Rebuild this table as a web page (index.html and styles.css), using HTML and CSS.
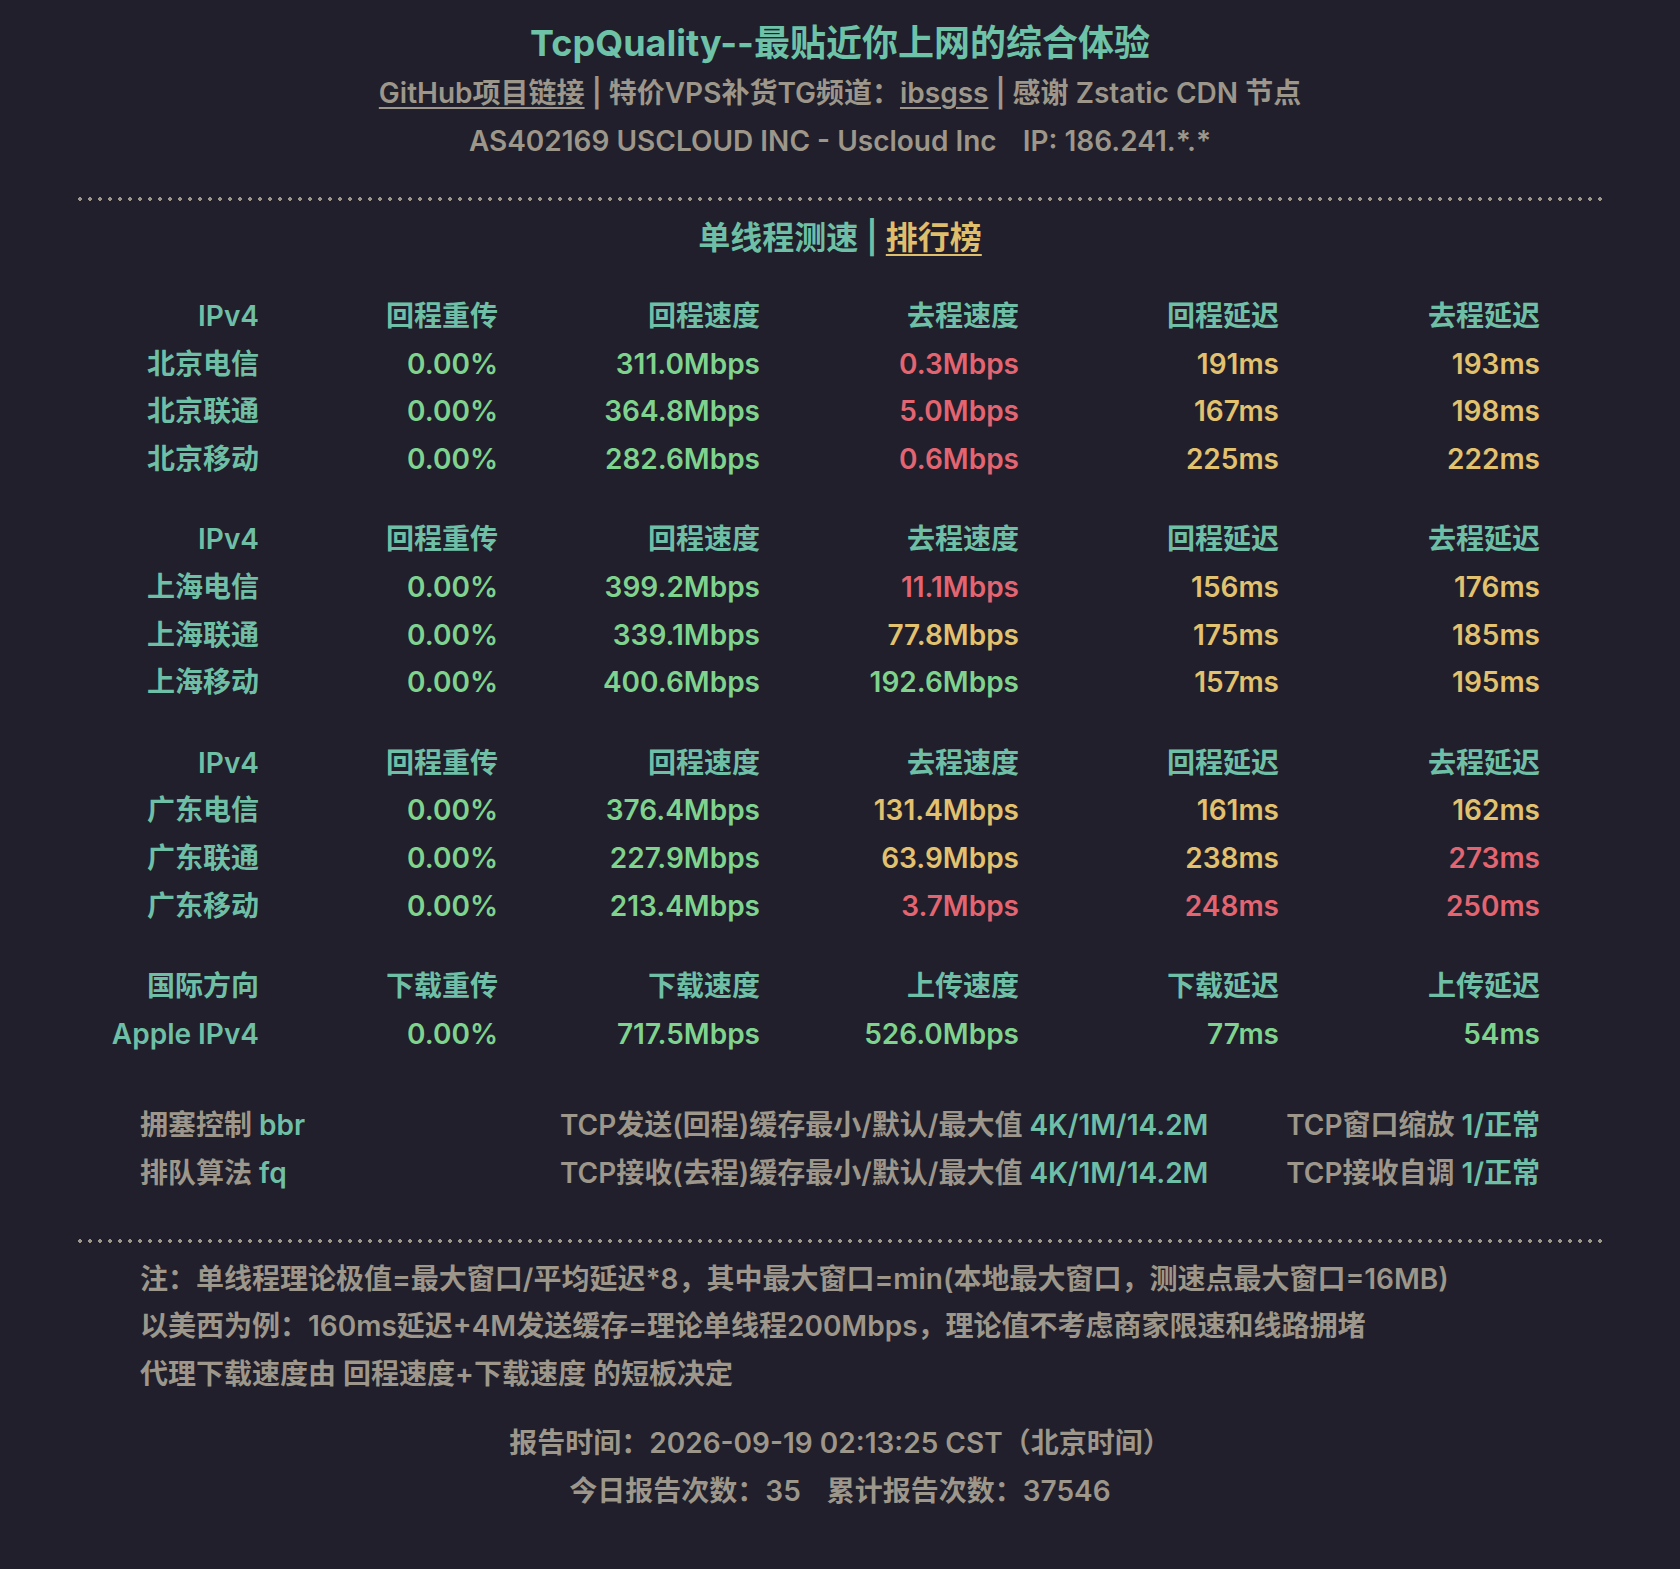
FILE: index.html
```html
<!DOCTYPE html>
<html lang="zh-CN">
<head>
<meta charset="utf-8">
<title>TcpQuality</title>
<link rel="stylesheet" href="styles.css">
</head>
<body>
<div class="page">
  <header class="head">
    <h1 class="title">TcpQuality--最贴近你上网的综合体验</h1>
    <div class="line"><a class="link">GitHub项目链接</a> | 特价VPS补货TG频道：<a class="link">ibsgss</a> | 感谢 Zstatic CDN 节点</div>
    <div class="line">AS402169 USCLOUD INC - Uscloud Inc<span class="gap"></span>IP: 186.241.*.*</div>
  </header>

  <div class="dots top-dots"></div>

  <div class="tabs"><span class="teal">单线程测速 | </span><a class="rank">排行榜</a></div>

  <div class="grp">
    <div class="h">IPv4</div><div class="h">回程重传</div><div class="h">回程速度</div><div class="h">去程速度</div><div class="h">回程延迟</div><div class="h">去程延迟</div>
    <div class="h">北京电信</div><div class="g">0.00%</div><div class="g">311.0Mbps</div><div class="r">0.3Mbps</div><div class="y">191ms</div><div class="y">193ms</div>
    <div class="h">北京联通</div><div class="g">0.00%</div><div class="g">364.8Mbps</div><div class="r">5.0Mbps</div><div class="y">167ms</div><div class="y">198ms</div>
    <div class="h">北京移动</div><div class="g">0.00%</div><div class="g">282.6Mbps</div><div class="r">0.6Mbps</div><div class="y">225ms</div><div class="y">222ms</div>
  </div>

  <div class="grp">
    <div class="h">IPv4</div><div class="h">回程重传</div><div class="h">回程速度</div><div class="h">去程速度</div><div class="h">回程延迟</div><div class="h">去程延迟</div>
    <div class="h">上海电信</div><div class="g">0.00%</div><div class="g">399.2Mbps</div><div class="r">11.1Mbps</div><div class="y">156ms</div><div class="y">176ms</div>
    <div class="h">上海联通</div><div class="g">0.00%</div><div class="g">339.1Mbps</div><div class="y">77.8Mbps</div><div class="y">175ms</div><div class="y">185ms</div>
    <div class="h">上海移动</div><div class="g">0.00%</div><div class="g">400.6Mbps</div><div class="g">192.6Mbps</div><div class="y">157ms</div><div class="y">195ms</div>
  </div>

  <div class="grp">
    <div class="h">IPv4</div><div class="h">回程重传</div><div class="h">回程速度</div><div class="h">去程速度</div><div class="h">回程延迟</div><div class="h">去程延迟</div>
    <div class="h">广东电信</div><div class="g">0.00%</div><div class="g">376.4Mbps</div><div class="y">131.4Mbps</div><div class="y">161ms</div><div class="y">162ms</div>
    <div class="h">广东联通</div><div class="g">0.00%</div><div class="g">227.9Mbps</div><div class="y">63.9Mbps</div><div class="y">238ms</div><div class="r">273ms</div>
    <div class="h">广东移动</div><div class="g">0.00%</div><div class="g">213.4Mbps</div><div class="r">3.7Mbps</div><div class="r">248ms</div><div class="r">250ms</div>
  </div>

  <div class="grp">
    <div class="h">国际方向</div><div class="h">下载重传</div><div class="h">下载速度</div><div class="h">上传速度</div><div class="h">下载延迟</div><div class="h">上传延迟</div>
    <div class="h">Apple IPv4</div><div class="g">0.00%</div><div class="g">717.5Mbps</div><div class="g">526.0Mbps</div><div class="g">77ms</div><div class="g">54ms</div>
  </div>

  <div class="sys">
    <div>拥塞控制 <span class="teal">bbr</span></div>
    <div>TCP发送(回程)缓存最小/默认/最大值 <span class="teal">4K/1M/14.2M</span></div>
    <div class="right">TCP窗口缩放 <span class="teal">1/正常</span></div>
    <div>排队算法 <span class="teal">fq</span></div>
    <div>TCP接收(去程)缓存最小/默认/最大值 <span class="teal">4K/1M/14.2M</span></div>
    <div class="right">TCP接收自调 <span class="teal">1/正常</span></div>
  </div>

  <div class="dots bottom-dots"></div>

  <div class="notes">
    <div>注：单线程理论极值=最大窗口/平均延迟*8，其中最大窗口=min(本地最大窗口，测速点最大窗口=16MB)</div>
    <div>以美西为例：160ms延迟+4M发送缓存=理论单线程200Mbps，理论值不考虑商家限速和线路拥堵</div>
    <div>代理下载速度由 回程速度+下载速度 的短板决定</div>
  </div>

  <footer class="foot">
    <div>报告时间：2026-09-19 02:13:25 CST（北京时间）</div>
    <div>今日报告次数：35<span class="gap2"></span>累计报告次数：37546</div>
  </footer>
</div>
</body>
</html>
```

FILE: styles.css
```css
html, body {
  margin: 0;
  padding: 0;
  background: #201f2b;
}

body {
  font-family: Inter, "Noto Sans CJK SC", sans-serif;
  font-weight: 600;
  font-size: 28px;
  line-height: 47.6px;
  color: #9d968a;
}

.page {
  padding: 16px 78px 55px;
}

.head {
  text-align: center;
}

.title {
  margin: 0;
  font-size: 36px;
  line-height: 54px;
  font-weight: 700;
  color: #6dc2a8;
}

.line {
  line-height: 47.5px;
}

.link {
  color: #9d968a;
  text-decoration: underline;
  text-decoration-thickness: 2px;
  text-underline-offset: 4px;
}

.gap {
  display: inline-block;
  width: 26px;
}

.gap2 {
  display: inline-block;
  width: 26px;
}

.dots {
  height: 4px;
  background-image: radial-gradient(circle at 2px 2px, #9d968a 1.6px, transparent 2px);
  background-size: 10px 4px;
  background-repeat: repeat-x;
}

.top-dots {
  margin-top: 32px;
}

.tabs {
  margin-top: 13px;
  text-align: center;
  font-size: 32px;
  line-height: 48px;
}

.teal {
  color: #6fbfa7;
}

.rank {
  color: #e0bf6c;
  text-decoration: underline;
  text-decoration-thickness: 2px;
  text-underline-offset: 5px;
}

.grp {
  display: grid;
  grid-template-columns: 181px 239px 262px 259px 260px 261px;
  text-align: right;
  line-height: 47.6px;
}

.tabs + .grp {
  margin-top: 31px;
}

.grp + .grp {
  margin-top: 33px;
}

.h {
  color: #6fbfa7;
}

.g {
  color: #7fd38e;
}

.r {
  color: #e26571;
}

.y {
  color: #e2c16f;
}

.sys {
  display: grid;
  grid-template-columns: 420px 651px 1fr;
  padding: 0 62px;
  margin-top: 44px;
}

.right {
  text-align: right;
}

.bottom-dots {
  margin-top: 41px;
}

.notes {
  padding: 0 62px;
  margin-top: 13px;
}

.foot {
  margin-top: 22px;
  text-align: center;
}
```
